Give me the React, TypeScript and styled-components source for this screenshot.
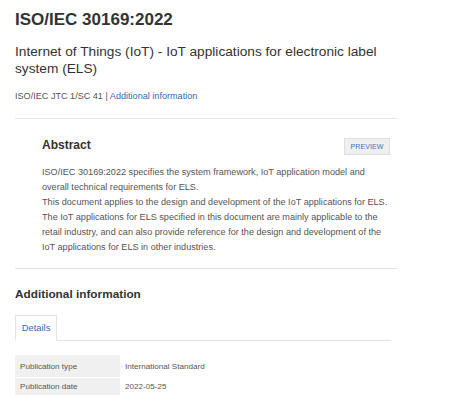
import { Fragment } from 'react';
import styled, { createGlobalStyle } from 'styled-components';

const Global = createGlobalStyle`
  body {
    margin: 0;
    background: #fff;
    font-family: "Liberation Sans", Arial, sans-serif;
    color: #333;
  }
`;

const Page = styled.div`
  width: 382px;
  padding: 10px 0 0 15px;
`;

const Title = styled.h1`
  margin: 0;
  font-size: 17px;
  line-height: 20px;
  font-weight: 700;
  color: #333;
`;

const Subtitle = styled.h2`
  margin: 14px 0 0;
  font-size: 13.7px;
  line-height: 16.5px;
  font-weight: 400;
  color: #333;
  width: 370px;
`;

const Meta = styled.div`
  margin-top: 13px;
  font-size: 9.1px;
  line-height: 12px;
  color: #555;
`;

const Link = styled.a`
  color: #2f6db5;
  text-decoration: none;
`;

const Rule = styled.hr<{ $top: number }>`
  margin: ${(p) => p.$top}px 0 0;
  border: 0;
  border-top: 1px solid #e3e3e3;
`;

const Abstract = styled.section`
  padding: 19px 7px 0 27px;
`;

const AbstractHead = styled.div`
  display: flex;
  justify-content: space-between;
  align-items: flex-start;
`;

const SectionTitle = styled.h3`
  margin: 0;
  font-size: 12px;
  line-height: 14px;
  font-weight: 700;
  color: #333;
`;

const Preview = styled.button`
  width: 46px;
  height: 17px;
  padding: 0;
  border: 1px solid #dedede;
  background: #efefef;
  color: #3b72b8;
  font-family: "Liberation Sans", Arial, sans-serif;
  font-size: 7px;
  letter-spacing: 0.1px;
`;

const Body = styled.p`
  margin: 9.5px 0 0;
  font-size: 9.12px;
  line-height: 15px;
  color: #555;
`;

const InfoTitle = styled(SectionTitle)`
  margin-top: 18px;
  font-size: 11.8px;
`;

const Tabs = styled.div`
  margin-top: 14px;
  width: 376px;
  display: flex;
  border-bottom: 1px solid #e3e3e3;
`;

const Tab = styled.div`
  width: 40px;
  height: 24px;
  margin-bottom: -1px;
  border: 1px solid #e3e3e3;
  border-bottom-color: #fff;
  background: #fff;
  color: #2f6db5;
  font-size: 9.4px;
  line-height: 24px;
  text-align: center;
`;

const Table = styled.div`
  margin-top: 14px;
  width: 377px;
  display: grid;
  grid-template-columns: 105px 1fr;
  row-gap: 1px;
`;

const Label = styled.div<{ $h: number }>`
  height: ${(p) => p.$h}px;
  background: #f0f0f0;
  padding-left: 5px;
  font-size: 8.1px;
  color: #555;
  display: flex;
  align-items: center;
`;

const Value = styled.div<{ $h: number }>`
  height: ${(p) => p.$h}px;
  padding-left: 5px;
  font-size: 8.1px;
  color: #555;
  display: flex;
  align-items: center;
`;

const rows = [
  { label: 'Publication type', value: 'International Standard', h: 22 },
  { label: 'Publication date', value: '2022-05-25', h: 17 },
];

export default function App() {
  return (
    <Page>
      <Global />
      <Title>ISO/IEC 30169:2022</Title>
      <Subtitle>Internet of Things (IoT) - IoT applications for electronic label system (ELS)</Subtitle>
      <Meta>
        ISO/IEC JTC 1/SC 41 | <Link href="#">Additional information</Link>
      </Meta>
      <Rule $top={16} />
      <Abstract>
        <AbstractHead>
          <SectionTitle>Abstract</SectionTitle>
          <Preview>PREVIEW</Preview>
        </AbstractHead>
        <Body>
          ISO/IEC 30169:2022 specifies the system framework, IoT application model and overall
          technical requirements for ELS.
          <br />
          This document applies to the design and development of the IoT applications for ELS.
          <br />
          The IoT applications for ELS specified in this document are mainly applicable to the
          retail industry, and can also provide reference for the design and development of the
          IoT applications for ELS in other industries.
        </Body>
      </Abstract>
      <Rule $top={13.5} />
      <InfoTitle>Additional information</InfoTitle>
      <Tabs>
        <Tab>Details</Tab>
      </Tabs>
      <Table>
        {rows.map((r) => (
          <Fragment key={r.label}>
            <Label $h={r.h}>{r.label}</Label>
            <Value $h={r.h}>{r.value}</Value>
          </Fragment>
        ))}
      </Table>
    </Page>
  );
}
